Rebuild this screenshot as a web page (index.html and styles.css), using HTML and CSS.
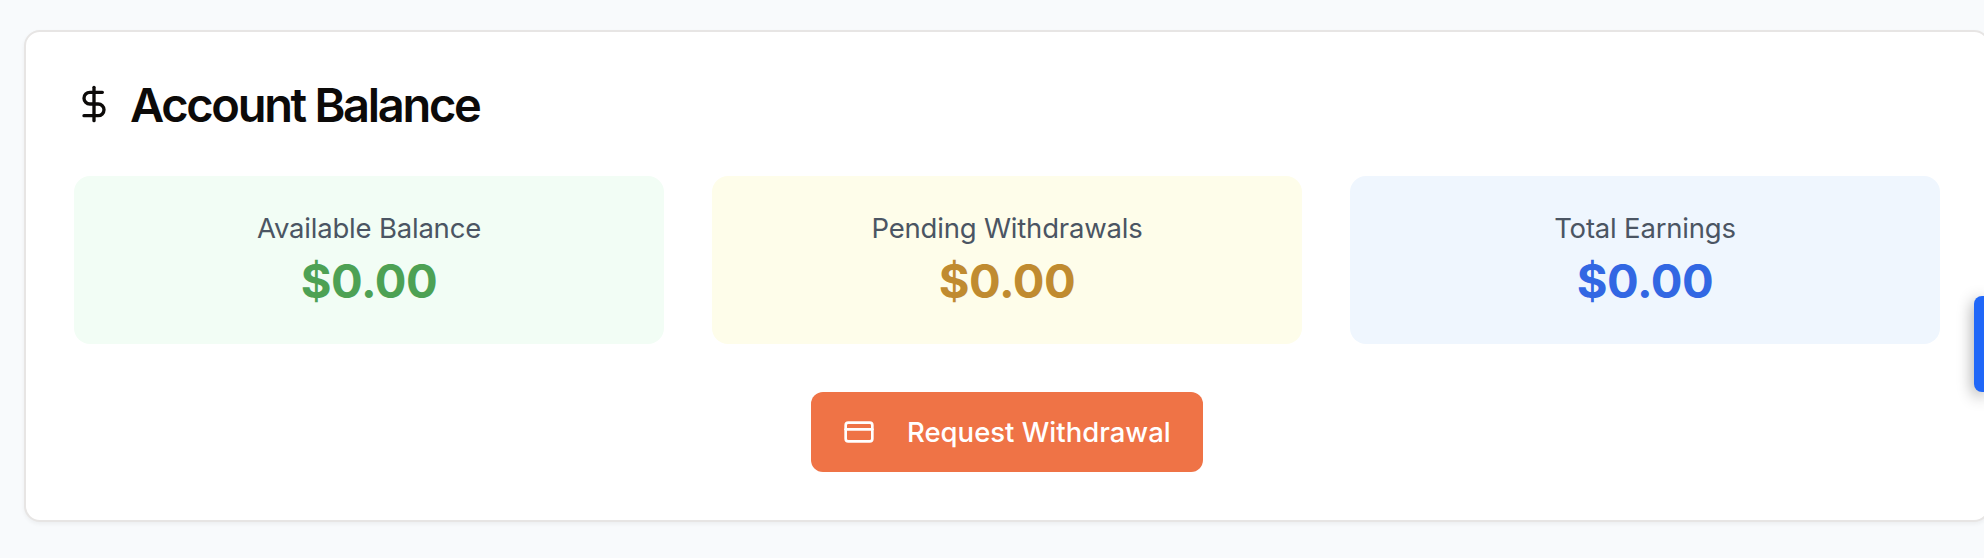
FILE: index.html
```html
<!DOCTYPE html>
<html lang="en">
<head>
<meta charset="utf-8">
<title>Account Balance</title>
<link rel="stylesheet" href="styles.css">
</head>
<body>
<main class="page">
  <section class="card">
    <h2 class="card-title">
      <svg class="title-icon" viewBox="0 0 24 24" fill="none" stroke="currentColor" stroke-width="2" stroke-linecap="round" stroke-linejoin="round"><line x1="12" x2="12" y1="2" y2="22"/><path d="M17 5H9.5a3.5 3.5 0 0 0 0 7h5a3.5 3.5 0 0 1 0 7H6"/></svg>
      <span class="title-text">Account Balance</span>
    </h2>
    <div class="stats">
      <div class="stat stat-green">
        <p class="label">Available Balance</p>
        <p class="value">$0.00</p>
      </div>
      <div class="stat stat-yellow">
        <p class="label">Pending Withdrawals</p>
        <p class="value">$0.00</p>
      </div>
      <div class="stat stat-blue">
        <p class="label">Total Earnings</p>
        <p class="value">$0.00</p>
      </div>
    </div>
    <div class="actions">
      <button class="button" type="button">
        <svg class="button-icon" viewBox="0 0 24 24" fill="none" stroke="currentColor" stroke-width="2" stroke-linecap="round" stroke-linejoin="round"><rect width="20" height="14" x="2" y="5" rx="2"/><line x1="2" x2="22" y1="10" y2="10"/></svg>
        <span class="button-text">Request Withdrawal</span>
      </button>
    </div>
  </section>
</main>
<div class="side-tab"></div>
</body>
</html>
```
FILE: styles.css
```css
* { box-sizing: border-box; }
body {
  margin: 0;
  height: 558px;
  overflow: hidden;
  background: #f8fafc;
  font-family: Inter, "Liberation Sans", sans-serif;
}
.page { padding: 30px 0 0 24px; }
.card {
  width: 1966px;
  height: 492px;
  padding: 48px;
  background: #fff;
  border: 2px solid #e7e5e4;
  border-radius: 16px;
  box-shadow: 0 2px 4px rgba(0, 0, 0, 0.05);
}
.card-title {
  display: flex;
  align-items: center;
  gap: 16px;
  height: 48px;
  margin: 0 0 48px;
  color: #0c0a09;
  font-size: 47px;
  font-weight: 600;
  line-height: 48px;
  letter-spacing: -2.3px;
}
.title-icon { width: 40px; height: 40px; flex: none; }
.title-text { padding-top: 2px; }
.stats {
  display: grid;
  grid-template-columns: repeat(3, 1fr);
  gap: 48px;
}
.stat {
  padding: 32px;
  border-radius: 16px;
  text-align: center;
}
.stat-green { background: #f2fdf5; color: #4da154; }
.stat-yellow { background: #fefdea; color: #c08b30; }
.stat-blue { background: #eff6fe; color: #3267e3; }
.label {
  margin: 0;
  color: #4b5563;
  font-size: 27.5px;
  line-height: 40px;
  letter-spacing: -0.2px;
}
.value {
  margin: 0;
  padding-top: 2px;
  font-size: 47px;
  font-weight: 700;
  line-height: 62px;
  letter-spacing: -0.5px;
}
.actions { display: flex; justify-content: center; margin-top: 48px; }
.button {
  display: flex;
  align-items: center;
  gap: 32px;
  width: 392px;
  height: 80px;
  padding: 0 32px;
  border: 0;
  border-radius: 12px;
  background: #ef7346;
  color: #fff;
  font-family: inherit;
  font-size: 27.5px;
  font-weight: 500;
  white-space: nowrap;
}
.button-icon { width: 32px; height: 32px; flex: none; }
.side-tab {
  position: absolute;
  top: 296px;
  right: 0;
  width: 10px;
  height: 96px;
  border-radius: 8px 0 0 8px;
  background: #2067f8;
  box-shadow: 0 4px 16px rgba(0, 0, 0, 0.45);
}
```
